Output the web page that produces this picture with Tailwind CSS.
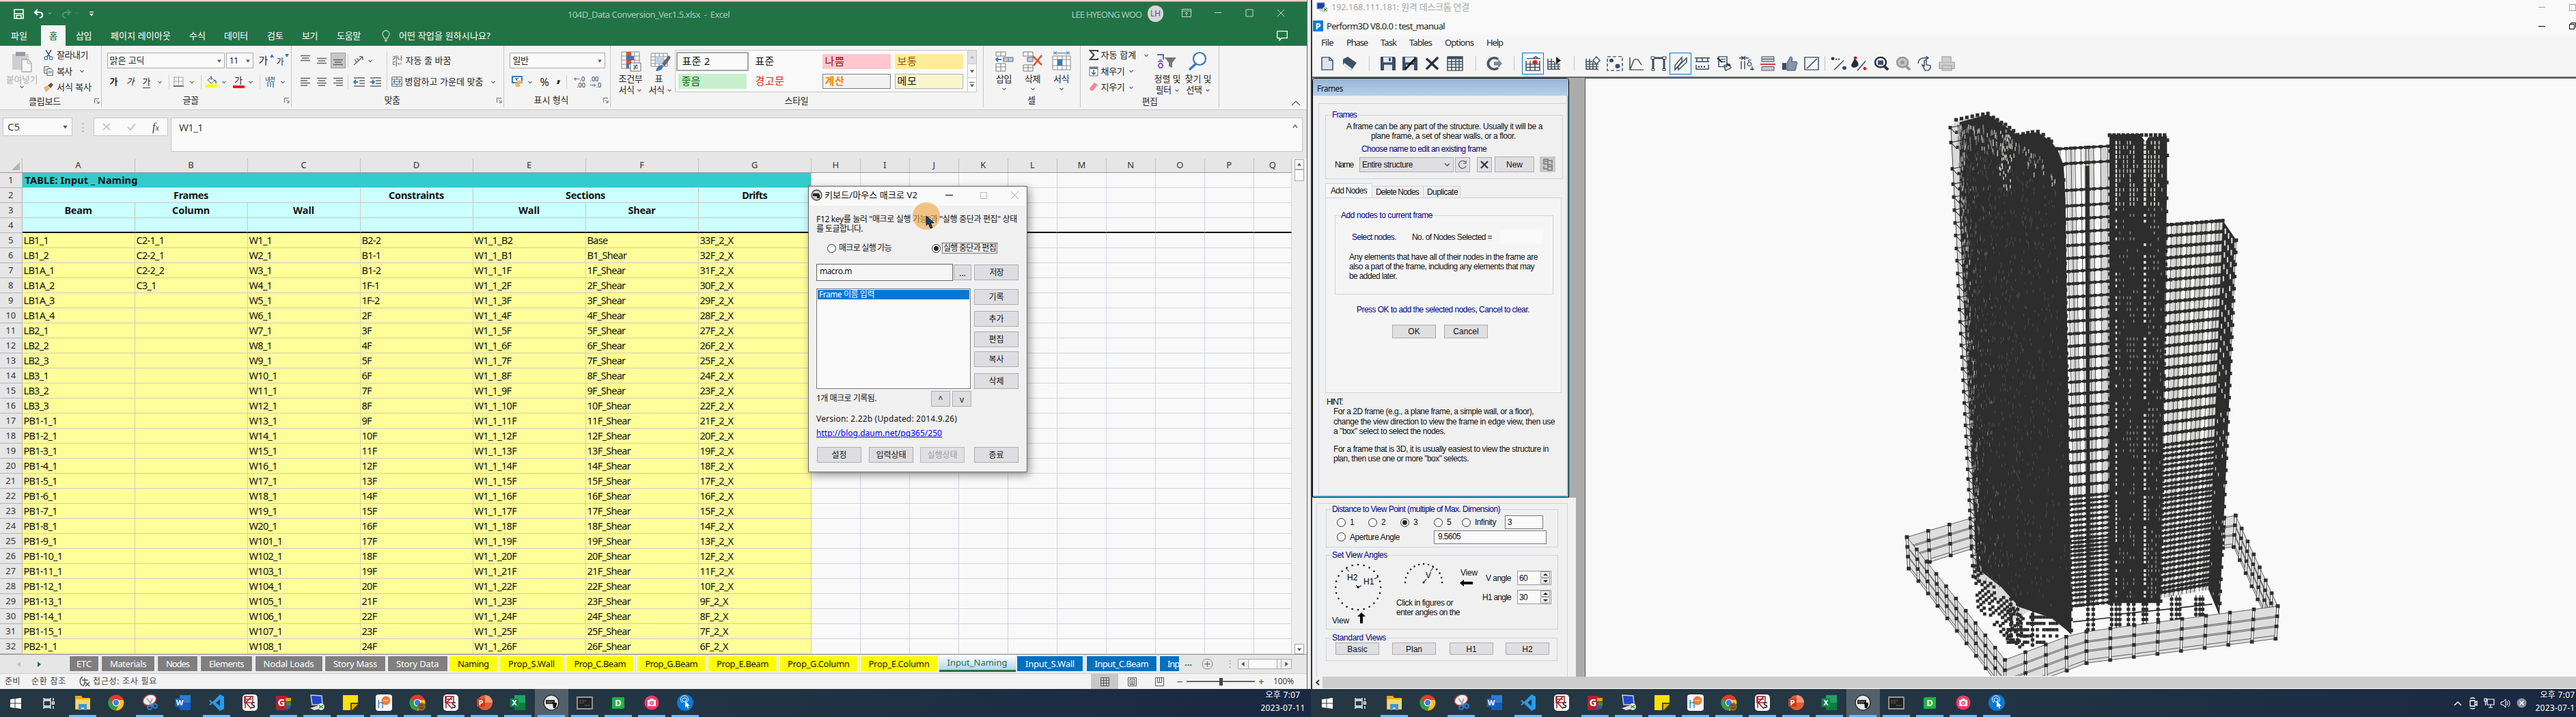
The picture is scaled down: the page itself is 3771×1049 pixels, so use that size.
<!DOCTYPE html>
<html lang="ko">
<head>
<meta charset="utf-8">
<title>Desktop</title>
<script src="https://cdn.jsdelivr.net/npm/@tailwindcss/browser@4"></script>
</head>
<body class="w-[3771px] h-[1049px] overflow-hidden flex bg-[#f9f9f9] text-[13px] leading-none text-[#262626] font-['Noto_Sans','Noto_Sans_CJK_KR',sans-serif] whitespace-nowrap">
<svg class="hidden">
  <symbol id="car" viewBox="0 0 8 8"><path d="M1.5 3l2.5 2.5L6.500 3" fill="none" stroke="#666" stroke-width="1.2"/></symbol>
  <symbol id="tri" viewBox="0 0 8 8"><path d="M1 2.500h6L4 6.500z" fill="#555"/></symbol>
  <symbol id="lau" viewBox="0 0 8 8"><path d="M.5 7V.5H7M3 3l4 4M7 4v3.300H4" fill="none" stroke="#666"/></symbol>
  <symbol id="al" viewBox="0 0 16 14"><path d="M1 1.500h14M1 5h10M1 8.500h14M1 12h10" stroke="#666" stroke-width="1.300"/></symbol>
  <symbol id="ac" viewBox="0 0 16 14"><path d="M1 1.500h14M3 5h10M1 8.500h14M3 12h10" stroke="#666" stroke-width="1.300"/></symbol>
  <symbol id="ar" viewBox="0 0 16 14"><path d="M1 1.500h14M5 5h10M1 8.500h14M5 12h10" stroke="#666" stroke-width="1.300"/></symbol>
  <symbol id="bars" viewBox="0 0 16 10"><path d="M1 1.500h14M3 5h10M1 8.500h14" stroke="#666" stroke-width="1.300"/></symbol>
</svg>

<!-- Left monitor -->
<div class="w-[1919px] h-[1049px] flex flex-col relative">
 <div class="flex h-[1008px]">
 <section class="w-[1913px] h-[1008px] flex flex-col bg-[#e6e6e6]">
  <div class="h-[3px] bg-[#f6cfc6] border-b border-[#888]"></div>
  <!-- title bar -->
  <header class="h-[34px] bg-[#217346] flex items-center text-[#a9cdb8]">
    <div class="w-[49px] pl-[20px]"><svg width="15" height="15" viewBox="0 0 15 15"><path d="M1 1h13v13H1zM4 14V9.500h7V14M1 7h13" fill="none" stroke="#fff" stroke-width="1.600"/></svg></div>
    <div class="w-[20px]"><svg width="17" height="14" viewBox="0 0 17 14"><path d="M2 5h7c5 0 6 7 0 8M6 1L2 5l4 4" fill="none" stroke="#fff" stroke-width="2.200"/></svg></div>
    <svg class="w-[8px] h-[8px]" viewBox="0 0 8 8"><path d="M1.500 2L4 4.500 6.500 2" fill="none" stroke="#a9cdb8"/></svg>
    <div class="w-[32px] pl-[11px] box-border"><svg width="17" height="14" viewBox="0 0 17 14"><path d="M15 5H8c-5 0-6 7 0 8M11 1l4 4-4 4" fill="none" stroke="#4f9670" stroke-width="2"/></svg></div>
    <svg class="w-[8px] h-[8px]" viewBox="0 0 8 8"><path d="M1.500 2L4 4.500 6.500 2" fill="none" stroke="#4f9670"/></svg>
    <div class="w-[720px] pl-[14px]"><svg width="8" height="9" viewBox="0 0 8 9"><path d="M1 1.500h6" stroke="#fff" stroke-width="1.200"/><path d="M1 4h6L4 7.500z" fill="#fff"/></svg></div>
    <div class="w-[743px] pt-[3px]"><span data-w="237">104D_Data Conversion_Ver.1.5.xlsx&nbsp; -&nbsp; Excel</span></div>
    <div class="w-[112px] pt-[3px]"><span data-w="103">LEE HYEONG WOO</span></div>
    <div class="w-[24px] h-[24px] rounded-full bg-[#d9d6d9] text-[#555] text-[12px] flex items-center justify-center">LH</div>
    <div class="w-[184px] ml-[27px] flex gap-[32px] pb-[3px]">
      <svg width="14" height="12" viewBox="0 0 14 12"><path d="M.5.500h13v11H.5zM.5 3h13M7 10V5M5 7l2-2 2 2" fill="none" stroke="#c5dccf"/></svg>
      <svg width="14" height="12" viewBox="0 0 14 12"><path d="M2 5.500h10" stroke="#c5dccf"/></svg>
      <svg width="14" height="12" viewBox="0 0 14 12"><path d="M2 1h10v10H2z" fill="none" stroke="#c5dccf"/></svg>
      <svg width="14" height="12" viewBox="0 0 14 12"><path d="M2 1l10 10M12 1L2 11" stroke="#c5dccf"/></svg>
    </div>
  </header>
  <!-- ribbon tabs -->
  <nav class="h-[30px] bg-[#217346] flex items-center text-white pl-[16px]">
    <div class="w-[44px]"><span data-w="24">파일</span></div>
    <div class="w-[36px] h-[30px] bg-[#f5f5f5] text-[#217346] flex items-center justify-center font-medium">홈</div>
    <div class="w-[66px] pl-[15px]"><span data-w="23">삽입</span></div>
    <div class="w-[115px]"><span data-w="88">페이지 레이아웃</span></div>
    <div class="w-[51px]"><span data-w="24">수식</span></div>
    <div class="w-[63px]"><span data-w="35">데이터</span></div>
    <div class="w-[51px]"><span data-w="24">검토</span></div>
    <div class="w-[51px]"><span data-w="23">보기</span></div>
    <div class="w-[65px]"><span data-w="35">도움말</span></div>
    <svg class="w-[14px] h-[17px]" viewBox="0 0 14 17"><path d="M4.500 12C4 9 2 8.500 2 5.500a5 4.800 0 0 1 10 0C12 8.500 10 9 9.500 12zM5 14.500h4M5.500 16.300h3" fill="none" stroke="#fff"/></svg>
    <div class="w-[1297px] pl-[12px]"><span data-w="134">어떤 작업을 원하시나요?</span></div>
    <svg width="16" height="15" viewBox="0 0 16 15"><path d="M.7.700h14.600v10H7L4 14v-3.300H.7z" fill="none" stroke="#fff" stroke-width="1.300"/></svg>
  </nav>
  <!-- ribbon -->
  <div class="h-[94px] bg-[#f4f4f5] border-b border-[#c8c8c8] flex py-[3px]">
    <div class="w-[148.500px] border-r border-[#c6c6c6] -mt-[3px] flex flex-col">
      <div class="flex h-[73px]">
        <div class="w-[64px] flex flex-col items-center pt-[8px] text-[#b0b0b0]">
          <svg width="30" height="31" viewBox="0 0 30 31"><path d="M1 4h24v23H1z" fill="#cfcfd3"/><path d="M6 1h14v6H6z" fill="#9a9aa0"/><path d="M15 12h9l5 5v13H15z" fill="#f7f7f7" stroke="#a9a9ad" stroke-width="1.300"/><path d="M23 12v6h6" fill="none" stroke="#a9a9ad"/></svg>
          <span class="mt-[4px]" data-w="46">붙여넣기</span><svg class="w-[8px] h-[8px]"><use href="#car"/></svg>
        </div>
        <div class="pt-[2px] flex flex-col">
          <div class="h-[23.500px] flex items-center gap-[5px]"><svg width="14" height="15" viewBox="0 0 14 15"><path d="M3 0l6 10M11 0L5 10" stroke="#555" stroke-width="1.600"/><circle cx="3.300" cy="12" r="2.300" fill="none" stroke="#3b78b5" stroke-width="1.300"/><circle cx="10.700" cy="12" r="2.300" fill="none" stroke="#3b78b5" stroke-width="1.300"/></svg><span data-w="46">잘라내기</span></div>
          <div class="h-[23.500px] flex items-center gap-[5px]"><svg width="14" height="14" viewBox="0 0 14 14"><path d="M.7.700H7l1 1V10H.7z" fill="#fff" stroke="#555"/><path d="M5 3.700h6l2.300 2.300v7.300H5z" fill="#fff" stroke="#555"/><path d="M6.500 7.500H12M6.500 9.500H12M2 4h2M2 6h2" stroke="#3b78b5"/></svg><span data-w="22">복사</span><svg class="w-[8px] h-[8px] ml-[6px]"><use href="#car"/></svg></div>
          <div class="h-[23.500px] flex items-center gap-[5px]"><svg width="14" height="14" viewBox="0 0 14 14"><path d="M0 7l5-3 4 5-6 5z" fill="#e9b767"/><path d="M6 4l5-4 3 3-4 5z" fill="#555"/></svg><span data-w="51">서식 복사</span></div>
        </div>
      </div>
      <div class="h-[21px] flex items-center"><div class="w-[96px] pl-[42px]"><span data-w="47">클립보드</span></div><svg class="w-[8px] h-[8px] ml-auto mr-[2px]"><use href="#lau"/></svg></div>
    </div>
    <div class="w-[278px] border-r border-[#c6c6c6] -mt-[3px] flex flex-col">
      <div class="h-[73px] pt-[6px] pl-[8px]">
        <div class="h-[31px] flex items-center">
          <div class="w-[172px] h-[23px] border border-[#ababab] bg-[#fafafa] flex items-center justify-between pl-[3px] pr-[3px]"><span data-w="51">맑은 고딕</span><svg class="w-[8px] h-[8px]"><use href="#tri"/></svg></div>
          <div class="w-[40px] h-[23px] border border-[#ababab] ml-[2px] bg-[#fafafa] flex items-center justify-between pl-[4px] pr-[3px]"><span data-w="13">11</span><svg class="w-[8px] h-[8px]"><use href="#tri"/></svg></div>
          <div class="w-[24px] text-[15px] pl-[8px]">가</div><svg class="w-[6px] h-[5px] -mt-[15px]" viewBox="0 0 6 5"><path d="M0 5l3-5 3 5z" fill="#3b78b5"/></svg>
          <div class="w-[16px] text-[12px] pl-[4px] pt-[4px]">가</div><svg class="w-[6px] h-[5px] -mt-[15px]" viewBox="0 0 6 5"><path d="M0 0l3 5 3-5z" fill="#3b78b5"/></svg>
        </div>
        <div class="h-[31px] flex items-center">
          <div class="w-[23px] pl-[4px] font-bold">가</div><div class="w-[24px] pl-[5px] italic">가</div><div class="w-[26px] pl-[5px]"><span class="border-b border-[#444]">가</span></div>
          <svg class="w-[8px] h-[8px]"><use href="#car"/></svg>
          <i class="w-px h-[20px] bg-[#d0d0d0] ml-[9px]"></i>
          <svg class="ml-[6px]" width="15" height="15" viewBox="0 0 15 15"><path d="M1 1h13v12M1 1v12M7.500 1v12M1 7h13" fill="none" stroke="#777" stroke-dasharray="1.500 1"/><path d="M0 14h15" stroke="#444" stroke-width="1.500"/></svg>
          <svg class="w-[8px] h-[8px] ml-[8px]"><use href="#car"/></svg><i class="w-px h-[20px] bg-[#d0d0d0] ml-[9px]"></i>
          <svg class="ml-[6px]" width="17" height="17" viewBox="0 0 17 17"><path d="M3 6l5-4 5 5-5 4z" fill="#fff" stroke="#555"/><path d="M8 0v6M13 6q3 2 2 5" stroke="#3b78b5" stroke-width="1.600" fill="none"/><path d="M0 12.500h17V17H0z" fill="#ff0"/></svg>
          <svg class="w-[8px] h-[8px] ml-[6px]"><use href="#car"/></svg>
          <div class="ml-[9px] w-[17px] h-[18px] border-b-[4px] border-[#e02010] text-[13px] text-center">가</div>
          <svg class="w-[8px] h-[8px] ml-[5px]"><use href="#car"/></svg><i class="w-px h-[20px] bg-[#d0d0d0] ml-[9px]"></i>
          <div class="ml-[6px] w-[18px] text-[8px] text-center leading-[8px]">내천<svg class="mx-auto" width="10" height="8" viewBox="0 0 10 8"><path d="M1 0v7M5 0v7M9 0v8" stroke="#3b78b5" stroke-width="1.500"/></svg></div>
          <svg class="w-[8px] h-[8px] ml-[5px]"><use href="#car"/></svg>
        </div>
      </div>
      <div class="h-[21px] flex items-center pl-[119px]"><span data-w="23">글꼴</span><svg class="w-[8px] h-[8px] ml-auto mr-[2px]"><use href="#lau"/></svg></div>
    </div>
    <div class="w-[311px] border-r border-[#c6c6c6] -mt-[3px] flex flex-col">
      <div class="h-[73px] pt-[6px] pl-[12px]">
        <div class="h-[31px] flex items-center">
          <svg class="w-[16px] h-[10px] -mt-[8px]"><use href="#bars"/></svg><svg class="w-[16px] h-[10px] ml-[8px]"><use href="#bars"/></svg>
          <div class="w-[22px] h-[23px] ml-[5px] bg-[#c8c8c8] border border-[#999] flex items-end justify-center pb-[3px]"><svg class="w-[16px] h-[10px]"><use href="#bars"/></svg></div>
          <i class="w-px h-[20px] bg-[#d0d0d0] ml-[3px]"></i>
          <svg class="ml-[7px]" width="17" height="15" viewBox="0 0 17 15"><path d="M1 14L14 2M14 2H9M14 2v5M2 6l4 5M5 4l4 4" fill="none" stroke="#666" stroke-width="1.300"/></svg>
          <svg class="w-[8px] h-[8px] ml-[4px]"><use href="#car"/></svg><i class="w-px h-[56px] -mb-[31px] bg-[#d0d0d0] ml-[20px]"></i>
          <div class="w-[19px] ml-[8px] text-[8px] leading-[8px] whitespace-pre">가나
다<span class="text-[#3b78b5]">↵</span></div><span data-w="67">자동 줄 바꿈</span>
        </div>
        <div class="h-[31px] flex items-center">
          <svg class="w-[16px] h-[14px]"><use href="#al"/></svg><svg class="w-[16px] h-[14px] ml-[8px]"><use href="#ac"/></svg><svg class="w-[16px] h-[14px] ml-[8px]"><use href="#ar"/></svg><i class="w-px h-[20px] bg-[#d0d0d0] ml-[6px]"></i>
          <svg class="ml-[7px]" width="18" height="14" viewBox="0 0 18 14"><path d="M1 1h16M9 5h8M9 9h8M1 13h16" stroke="#666" stroke-width="1.300"/><path d="M7 7H1M4 4L1 7l3 3" fill="none" stroke="#3b78b5" stroke-width="1.800"/></svg>
          <svg class="ml-[6px]" width="18" height="14" viewBox="0 0 18 14"><path d="M1 1h16M9 5h8M9 9h8M1 13h16" stroke="#666" stroke-width="1.300"/><path d="M1 7h6M4 4l3 3-3 3" fill="none" stroke="#3b78b5" stroke-width="1.800"/></svg>
          <svg class="ml-[14px]" width="16" height="15" viewBox="0 0 16 15"><path d="M.7.700h14.600v13.600H.7zM.7 4h14.600M.7 11h14.600M8 .7V4M8 11v3" fill="none" stroke="#666"/><path d="M3 7.500h10M5 5.500l-2 2 2 2M11 5.500l2 2-2 2" fill="none" stroke="#3b78b5" stroke-width="1.200"/></svg>
          <span class="ml-[4px]" data-w="115">병합하고 가운데 맞춤</span><svg class="w-[8px] h-[8px] ml-[10px]"><use href="#car"/></svg>
        </div>
      </div>
      <div class="h-[21px] flex items-center pl-[136px]"><span data-w="23">맞춤</span><svg class="w-[8px] h-[8px] ml-auto mr-[2px]"><use href="#lau"/></svg></div>
    </div>
    <div class="w-[156px] border-r border-[#c6c6c6] -mt-[3px] flex flex-col">
      <div class="h-[73px] pt-[6px] pl-[8px]">
        <div class="h-[31px] flex items-center"><div class="w-[140px] h-[23px] border border-[#ababab] bg-[#fafafa] flex items-center justify-between pl-[4px] pr-[3px]"><span data-w="23">일반</span><svg class="w-[8px] h-[8px]"><use href="#tri"/></svg></div></div>
        <div class="h-[31px] flex items-center pl-[3px]">
          <svg width="17" height="17" viewBox="0 0 17 17"><path d="M1 1h14v9H1z" fill="#fff" stroke="#3b78b5" stroke-width="2"/><path d="M10 4H6l2 3" fill="none" stroke="#3b78b5" stroke-width="1.500"/><ellipse cx="12" cy="9" rx="4" ry="2.500" fill="#e9b767"/><path d="M5 10h7v6H6z" fill="#e9b767"/></svg>
          <svg class="w-[8px] h-[8px] ml-[6px]"><use href="#car"/></svg><div class="w-[24px] ml-[11px] text-[16px]">%</div><div class="w-[14px] text-[24px] font-bold -mt-[18px]">,</div>
          <i class="w-px h-[20px] bg-[#d0d0d0]"></i>
          <div class="ml-[10px] w-[24px] text-[9px] leading-[9px]"><b class="text-[#3b78b5]">←</b>.0<br>&nbsp; .00</div><div class="w-[20px] text-[9px] leading-[9px]">.00<br><b class="text-[#3b78b5]">→</b>.0</div>
        </div>
      </div>
      <div class="h-[21px] flex items-center pl-[44px]"><span data-w="51">표시 형식</span><svg class="w-[8px] h-[8px] ml-auto mr-[2px]"><use href="#lau"/></svg></div>
    </div>
    <div class="w-[546px] border-r border-[#c6c6c6] -mt-[3px] flex flex-col">
      <div class="h-[73px] flex">
        <div class="w-[56px] pl-[12px] pt-[8px]"><svg class="ml-[3px]" width="30" height="30" viewBox="0 0 30 30"><path d="M1 1h26v24H1zM1 7h26M1 13h26M1 19h26M8 1v24M20 1v24" fill="#fff" stroke="#888"/><path d="M8 1h7v6H8zM8 13h7v6H8z" fill="#d65532"/><path d="M8 7h11v6H8zM8 19h4v6H8z" fill="#3b78b5"/><path d="M14 17h15v12H14z" fill="#fff" stroke="#666"/><path d="M18 21.500h7M18 24.500h7M23 19l-4 8" stroke="#333"/></svg>
          <div class="mt-[4px]"><span data-w="35">조건부</span></div><div class="mt-[3px] flex items-center gap-[3px]"><span data-w="23">서식</span><svg class="w-[8px] h-[8px]"><use href="#car"/></svg></div></div>
        <div class="w-[38px] pt-[8px]"><svg class="ml-[2px]" width="30" height="30" viewBox="0 0 30 30"><path d="M1 3h24v19H1zM1 8h24M1 13h24M1 18h24M7 3v19M13 3v19M19 3v19" fill="#fff" stroke="#888"/><path d="M8 8h11v10H8z" fill="#bdd3ea"/><path d="M17 18L27 6l3 3-9 13z" fill="#666"/><path d="M8 29c2-7 5-9 10-9 2 6-4 9-10 9z" fill="#3b78b5"/></svg>
          <div class="mt-[4px] text-center pr-[8px]">표</div><div class="mt-[3px] flex items-center gap-[3px]"><span data-w="23">서식</span><svg class="w-[8px] h-[8px]"><use href="#car"/></svg></div></div>
        <div class="w-[442px] h-[62px] mt-[6px] border border-[#c6c6c6] bg-[#fafafa] flex text-[15px] text-[#111]">
          <div class="w-[427px] grid grid-cols-[108px_106px_106px_104px] grid-rows-[29px_29px] items-center pt-[1px] pl-[1px]">
            <div class="w-[106px] h-[28px] border-2 border-[#a6a6a6] flex items-center pl-[7px]"><span data-w="41">표준 2</span></div><div class="pl-[8px]"><span data-w="28">표준</span></div>
            <div class="w-[100px] h-[22px] bg-[#ffc7ce] text-[#9c0006] flex items-center pl-[4px]"><span data-w="29">나쁨</span></div><div class="w-[100px] h-[22px] bg-[#ffeb9c] text-[#9c5700] flex items-center pl-[4px]"><span data-w="29">보통</span></div>
            <div class="w-[100px] h-[22px] ml-[3px] bg-[#c6efce] text-[#006100] flex items-center pl-[5px]"><span data-w="28">좋음</span></div><div class="pl-[8px] text-[#e02010]"><span data-w="43">경고문</span></div>
            <div class="w-[100px] h-[22px] bg-[#f2f2f2] border border-[#7f7f7f] text-[#ee8a00] flex items-center pl-[3px] font-bold"><span data-w="29">계산</span></div><div class="w-[100px] h-[22px] bg-[#faf6cc] border border-[#b2b2b2] flex items-center pl-[3px]"><span data-w="29">메모</span></div>
          </div>
          <div class="flex-1 border-l border-[#c6c6c6] flex flex-col items-center divide-y divide-[#c6c6c6]"><div class="h-[20px] w-full bg-[#e2e2e4] flex items-center justify-center"><svg class="w-[8px] h-[8px] rotate-180 opacity-30"><use href="#tri"/></svg></div><div class="h-[20px] w-full flex items-center justify-center"><svg class="w-[8px] h-[8px]"><use href="#tri"/></svg></div><div class="h-[20px] w-full flex flex-col items-center justify-center"><i class="w-[7px] h-px bg-[#555]"></i><svg class="w-[8px] h-[8px]"><use href="#tri"/></svg></div></div>
        </div>
      </div>
      <div class="h-[21px] flex items-center pl-[255px]"><span data-w="35">스타일</span></div>
    </div>
    <div class="w-[142px] border-r border-[#c6c6c6] -mt-[3px] flex flex-col">
      <div class="h-[73px] pt-[8px] pl-[9px] flex text-center">
        <div class="w-[42px] flex flex-col items-center"><svg width="28" height="30" viewBox="0 0 28 30"><path d="M2 1h14v6H2zM9 1v6M2 18h14v11H2zM9 18v11M2 23h14" fill="#fff" stroke="#777"/><path d="M13 9h14v6H13zM20 9v6" fill="#bdd3ea" stroke="#667"/><path d="M10 12H2M5 9l-3 3 3 3" fill="none" stroke="#3b78b5" stroke-width="1.800"/></svg><span class="mt-[4px]" data-w="23">삽입</span><svg class="w-[8px] h-[8px] mt-[4px]"><use href="#car"/></svg></div>
        <div class="w-[42px] flex flex-col items-center"><svg width="30" height="30" viewBox="0 0 30 30"><path d="M1 1h14v6H1zM8 1v6M1 20h14v9H1zM8 20v9M1 24h14" fill="#fff" stroke="#777"/><path d="M7 9h8v6H7z" fill="#bdd3ea" stroke="#667"/><path d="M15 7l13 13M28 6L16 21" stroke="#d65532" stroke-width="2.600"/></svg><span class="mt-[4px]" data-w="23">삭제</span><svg class="w-[8px] h-[8px] mt-[4px]"><use href="#car"/></svg></div>
        <div class="w-[42px] flex flex-col items-center"><svg width="28" height="30" viewBox="0 0 28 30"><path d="M1 7h26v20H1zM1 12h26M1 21h26M8 7v20M15 7v20M21 7v20" fill="#fff" stroke="#888"/><path d="M8 12h7v9H8z" fill="#3b78b5"/><path d="M4 2.500h20M7 0L4 2.500 7 5M21 0l3 2.500L21 5M3 0v5M25 0v5" fill="none" stroke="#3b78b5"/></svg><span class="mt-[4px]" data-w="23">서식</span><svg class="w-[8px] h-[8px] mt-[4px]"><use href="#car"/></svg></div>
      </div>
      <div class="h-[21px] flex items-center justify-center">셀</div>
    </div>
    <div class="w-[203px] border-r border-[#c6c6c6] -mt-[3px] flex flex-col">
      <div class="h-[73px] flex pl-[12px]">
        <div class="w-[93px] pt-[2px]">
          <div class="h-[23.500px] flex items-center"><svg class="w-[18px] h-[15px]" viewBox="0 0 18 15"><path d="M13 3V1H1.500l6 6.500L1.500 14H13v-2" fill="none" stroke="#444" stroke-width="2"/></svg><span data-w="52">자동 합계</span><svg class="w-[8px] h-[8px] ml-[10px]"><use href="#car"/></svg></div>
          <div class="h-[23.500px] flex items-center"><svg class="w-[18px] h-[15px]" viewBox="0 0 18 15"><path d="M1 1h12v13H1z" fill="#fff" stroke="#777"/><path d="M1 1h12v3H1z" fill="#777"/><path d="M7 5v7M4 9l3 3 3-3" fill="none" stroke="#3b78b5" stroke-width="1.700"/></svg><span data-w="35">채우기</span><svg class="w-[8px] h-[8px] ml-[5px]"><use href="#car"/></svg></div>
          <div class="h-[23.500px] flex items-center"><svg class="w-[18px] h-[15px]" viewBox="0 0 18 15"><path d="M1 9l7-8 5 3-7 9-4-1z" fill="#ee8a9b"/></svg><span data-w="35">지우기</span><svg class="w-[8px] h-[8px] ml-[5px]"><use href="#car"/></svg></div>
        </div>
        <div class="w-[45px] pt-[8px] pl-[3px]"><svg class="ml-[3px]" width="30" height="30" viewBox="0 0 30 30"><path d="M1 5h9v7M5 21" fill="none" stroke="#3b78b5" stroke-width="2"/><path d="M2 15h8M4 13h4" stroke="#8b52b0" stroke-width="1.600"/><circle cx="6" cy="21" r="3.200" fill="none" stroke="#8b52b0" stroke-width="2"/><path d="M12 9h17l-6 8v7l-5-2v-5z" fill="#777"/></svg>
          <div class="mt-[4px]"><span data-w="39">정렬 및</span></div><div class="mt-[3px] flex items-center gap-[4px] pl-[2px]"><span data-w="23">필터</span><svg class="w-[8px] h-[8px]"><use href="#car"/></svg></div></div>
        <div class="pt-[8px] pl-[3px]"><svg class="ml-[4px]" width="30" height="30" viewBox="0 0 30 30"><circle cx="17" cy="11" r="9" fill="#fff" stroke="#3b78b5" stroke-width="2.200"/><path d="M12 18L2 27" stroke="#3b78b5" stroke-width="3.500"/></svg>
          <div class="mt-[4px]"><span data-w="39">찾기 및</span></div><div class="mt-[3px] flex items-center gap-[4px] pl-[2px]"><span data-w="23">선택</span><svg class="w-[8px] h-[8px]"><use href="#car"/></svg></div></div>
      </div>
      <div class="h-[21px] flex items-center pl-[90px]"><span data-w="23">편집</span></div>
    </div>
    <svg class="w-[14px] h-[8px] ml-auto mr-[9px] self-end mb-[2px]" viewBox="0 0 14 8"><path d="M1 7l6-6 6 6" fill="none" stroke="#555" stroke-width="1.200"/></svg>
  </div>
  <!-- formula bar -->
  <div class="h-[71px] flex pt-[11px] pl-[4px] text-[15px] text-[#444]">
    <div class="w-[102px] h-[27px] border border-[#c6c6c6] bg-[#fafafa] flex items-center justify-between pl-[6px] pr-[5px]"><span data-w="18">C5</span><svg class="w-[9px] h-[9px]"><use href="#tri"/></svg></div>
    <div class="w-[31px] h-[27px] flex items-center justify-center text-[#aaa]">⋮</div>
    <div class="w-[109px] h-[27px] border border-[#c6c6c6] bg-[#fafafa] flex items-center pl-[12px]">
      <svg class="w-[36px] h-[11px]" viewBox="0 0 36 11"><path d="M1 1l10 9M11 1L1 10" stroke="#c4c4c4" stroke-width="1.800"/></svg><svg class="w-[37px] h-[11px]" viewBox="0 0 37 11"><path d="M1 6l4 4 7-9" fill="none" stroke="#c4c4c4" stroke-width="2"/></svg><i class="font-['Liberation_Serif',serif] text-[16px]">f<span class="text-[12px]">x</span></i></div>
    <div class="w-[1657px] h-[50px] ml-[4px] border border-[#c6c6c6] bg-[#fafafa] flex justify-between items-start pl-[11px] pr-[6px] pt-[6px]"><span data-w="35">W1_1</span><svg class="w-[8px] h-[6px] mt-[3px]" viewBox="0 0 8 6"><path d="M1 5l3-4 3 4" fill="none" stroke="#666" stroke-width="1.500"/></svg></div>
  </div>
  <!-- grid -->
  <div class="flex h-[725px] overflow-hidden">
    <div class="w-[1891px]">
      <div id="cols" class="h-[20.500px] flex border-b border-[#999] text-[13px] text-[#333]"></div>
      <div id="rows" class="text-[14.500px] text-[#111]"></div>
    </div>
    <div class="w-[22px] bg-[#eeeeef] pl-[4px] pt-[1px] flex flex-col">
      <div class="w-[14px] h-[15px] border border-[#aaa] bg-[#fafafa] flex items-center justify-center"><svg class="w-[8px] h-[8px] rotate-180"><use href="#tri"/></svg></div>
      <div class="w-[14px] h-[17px] border border-[#aaa] bg-[#fafafa]"></div>
      <div class="w-[14px] h-[15px] border border-[#aaa] bg-[#fafafa] mt-auto flex items-center justify-center"><svg class="w-[8px] h-[8px]"><use href="#tri"/></svg></div>
    </div>
  </div>
  <!-- sheet tabs -->
  <div class="h-[28px] border-t border-[#999] flex items-start text-[13px]">
    <div class="w-[102px] h-full flex items-center pl-[24px] gap-[22px]"><svg width="8" height="8" viewBox="0 0 8 8"><path d="M6 0v8L1 4z" fill="#c0c0c0"/></svg><svg width="8" height="8" viewBox="0 0 8 8"><path d="M1 0v8l5-4z" fill="#217346"/></svg></div>
    <div id="sheets" class="flex w-[1624px] h-[27px]"></div>
    <b class="w-[34px] pl-[8px] pt-[5px] text-[#217346]">...</b>
    <svg class="w-[17px] h-[17px] mt-[5px] -ml-[1px]" viewBox="0 0 17 17"><circle cx="8.500" cy="8.500" r="7.500" fill="none" stroke="#888"/><path d="M4.500 8.500h8M8.500 4.500v8" stroke="#777" stroke-width="1.500"/></svg>
    <div class="w-[36px] pt-[6px] pl-[18px] text-[#aaa]">⋮</div>
    <div class="w-[79px] h-[15px] mt-[6px] border border-[#aaa] bg-[#f2f2f2] flex items-center justify-between"><svg class="w-[14px] h-[9px] rotate-90"><use href="#tri"/></svg><div class="flex-1 h-full bg-[#fafafa] border-x border-[#aaa] mr-[5px]"></div><div class="border-l border-[#aaa] h-full flex items-center"><svg class="w-[14px] h-[9px] -rotate-90"><use href="#tri"/></svg></div></div>
  </div>
  <!-- status bar -->
  <div class="h-[23px] bg-[#f3f3f3] border-t border-[#d0d0d0] flex items-center text-[12px] text-[#444] pl-[7px] flex-1">
    <div class="w-[39px]"><span data-w="23">준비</span></div><div class="w-[70px]"><span data-w="51">순환 참조</span></div>
    <svg class="w-[17px] h-[16px]" viewBox="0 0 17 16"><path d="M5 1C0 4 0 12 5 14M8 3v3M4 6h9M8 6v4l-2 5M9 9l6 6M15 9l-6 6" fill="none" stroke="#555" stroke-width="1.500"/></svg>
    <div class="w-[1464px] pl-[3px]"><span data-w="94">접근성: 조사 필요</span></div>
    <div class="w-[40px] h-[22px] bg-[#c8c8c8] flex items-center justify-center"><svg width="13" height="13" viewBox="0 0 13 13"><path d="M.5.500h12v12H.5zM.5 4.500h12M.5 8.500h12M4.500.500v12M8.500.500v12" fill="none" stroke="#555"/></svg></div>
    <div class="w-[40px] flex justify-center"><svg width="13" height="13" viewBox="0 0 13 13"><path d="M.5.500h12v12H.5zM3 2.500h7v8H3zM4.500 5h4M4.500 7h4M4.500 9h4" fill="none" stroke="#555"/></svg></div>
    <div class="w-[40px] flex justify-center"><svg width="13" height="13" viewBox="0 0 13 13"><path d="M.5.500h12v12H.5zM3.500.500v7h6v-7M6.500.500v7" fill="none" stroke="#555"/></svg></div>
    <div class="w-[14px] text-center ml-[3px] text-[15px]">−</div>
    <div class="w-[100px] h-[11px] ml-[3px] flex items-center justify-center relative"><div class="w-[100px] h-[1.500px] bg-[#666]"></div><div class="absolute w-[5px] h-[11px] bg-[#444] left-[48px]"></div></div>
    <div class="w-[27px] text-[15px] pl-[5px]">+</div><span data-w="30">100%</span>
  </div>
 </section>
 <div class="w-[6px] border-l border-[#666] bg-[#ececee]"></div>
 </div>
 <footer class="h-[41px] flex bg-gradient-to-r from-[#243743] from-40% to-[#1a2842] text-white">
   <div class="tb flex h-[41px] w-[1845px]"></div>
   <div class="w-[66px] pt-[3px] text-[12px] flex flex-col items-center gap-[5px]"><span class="h-[14px]" data-w="51">오후 7:07</span><span data-w="65">2023-07-11</span></div>
 </footer>

 <!-- macro dialog -->
 <div class="absolute left-[1183px] top-[272px] w-[321px] h-[419px] bg-[#f0f0f0] border border-[#666] shadow-[3px_4px_12px_rgba(0,0,0,0.4)] text-[12px] text-[#111]">
   <div class="h-[28px] bg-[#fafafa] flex items-center text-[13px] pb-[3px]">
     <svg class="w-[17px] h-[17px] ml-[3px]" viewBox="0 0 17 17"><circle cx="8.500" cy="8.500" r="7.500" fill="#ccc" stroke="#444" stroke-width="1.300"/><path d="M3 6h9v4H3zM9 8h4v5H9z" fill="#222"/></svg>
     <div class="w-[180px] pl-[3px]"><span data-w="136">키보드/마우스 매크로 V2</span></div>
     <div class="w-[51px]"><div class="w-[11px] h-px bg-black"></div></div><div class="w-[45px]"><div class="w-[10px] h-[10px] border border-[#bbb]"></div></div>
     <svg width="11" height="11" viewBox="0 0 11 11"><path d="M0 0l11 11M11 0L0 11" stroke="#aaa"/></svg>
   </div>
   <div class="pl-[11px] pt-[13px]">
     <div class="h-[14px] flex items-center"><span data-w="294">F12 key를 눌러 "매크로 실행 가능"과 "실행 중단과 편집" 상태</span></div>
     <div class="h-[14px] flex items-center"><span data-w="68">를 토글합니다.</span></div>
     <div class="flex items-center mt-[12px] h-[18px] pl-[16px]"><div class="w-[13px] h-[13px] rounded-full border border-[#333] bg-[#fafafa]"></div><div class="w-[140px] pl-[4px]"><span data-w="77">매크로 실행 가능</span></div><div class="w-[13px] h-[13px] rounded-full border border-[#333] bg-[#fafafa] flex items-center justify-center"><div class="w-[7px] h-[7px] rounded-full bg-[#222]"></div></div><div class="ml-[2px] h-[16px] border border-dotted border-black flex items-center px-px"><span data-w="77">실행 중단과 편집</span></div></div>
     <div class="flex mt-[14px]"><div class="w-[200px] h-[25px] border border-[#666] bg-[#f6f6f7] flex items-center pl-[4px] pb-[4px]"><span data-w="47">macro.m</span></div><div class="w-[26px] h-[23px] mt-px ml-px border border-[#adadad] bg-[#dedee2] text-center pt-[6px]">...</div><div class="w-[65px] h-[23px] mt-px ml-[4px] border border-[#adadad] bg-[#dedee2] flex items-center justify-center"><span data-w="20">저장</span></div></div>
     <div class="flex mt-[11px]"><div class="w-[226px] h-[147px] border border-[#7a7a7a] bg-[#fafafa] p-px"><div class="h-[14px] bg-[#0078d7] text-white flex items-center pl-[2px]"><span data-w="81">Frame 이름 입력</span></div></div>
       <div class="ml-[5px] flex flex-col pt-px text-center *:w-[65px] *:h-[23px] *:border *:border-[#adadad] *:bg-[#dedee2] *:pt-[5px]"><div>기록</div><div class="mt-[9px]">추가</div><div class="mt-[7px]">편집</div><div class="mt-[6px]">복사</div><div class="mt-[9px]">삭제</div></div></div>
     <div class="flex mt-[3px] items-center"><div class="w-[168px] pb-[2px]"><span data-w="88">1개 매크로 기록됨.</span></div><div class="w-[28px] h-[23px] border border-[#adadad] bg-[#dedee2] text-center pt-[5px]">^</div><div class="w-[28px] h-[23px] ml-[3px] border border-[#adadad] bg-[#dedee2] text-center pt-[6px]">v</div></div>
     <div class="mt-[10px] h-[16px] flex items-center"><span data-w="206">Version: 2.22b (Updated: 2014.9.26)</span></div>
     <div class="mt-[5px] h-[16px] flex items-center text-[#0000ee] underline"><span data-w="184">http://blog.daum.net/pq365/250</span></div>
     <div class="flex mt-[12px] pl-px text-center *:w-[65px] *:h-[23px] *:border *:border-[#adadad] *:bg-[#dedee2] *:pt-[5px]"><div>설정</div><div class="ml-[11px]">입력상태</div><div class="ml-[10px] text-[#888] opacity-80">실행상태</div><div class="ml-[14px]">종료</div></div>
   </div>
 </div>
 <div class="absolute left-[1336px] top-[296px] w-[40px] h-[40px] rounded-full bg-[#f2a33a]/60"></div>
 <svg class="absolute left-[1355px] top-[315px]" width="14" height="20" viewBox="0 0 14 20"><path d="M1 1v14l3-3 3 7 3-1-3-7h5z" fill="#17407c" stroke="#111"/></svg>
</div>

<!-- Right monitor -->
<div class="w-[1852px] h-[1049px] flex flex-col">
 <section class="h-[1008px] border-l-2 border-[#333] flex flex-col">
  <div class="h-[25px] flex items-center pl-[6px] text-[#aaa] pb-[4px]">
    <svg class="w-[17px] h-[16px]" viewBox="0 0 17 16"><path d="M1 1h11v9H1z" fill="#1c3fb0" stroke="#99a"/><path d="M3 11l8 4 1-3z" fill="#bbb"/><circle cx="13" cy="11" r="4" fill="#c9d6c9"/><path d="M11 9l2 2-2 2M15 9l-2 2 2 2" stroke="#2a8a2a" fill="none"/></svg>
    <div class="w-[1774px] pl-[5px]"><span data-w="202">192.168.111.181: 원격 데스크톱 연결</span></div><div class="w-[10px] h-px bg-[#a898a8]"></div><div class="ml-[35px] w-[10px] h-[10px] border border-[#a898a8] shrink-0"></div>
  </div>
  <div class="h-[26px] flex items-center text-[#222]">
    <div class="w-[15px] h-[16px] bg-[#0b7ad8] text-white font-bold flex items-center justify-center ml-px">P</div>
    <div class="w-[1781px] pl-[5px]"><span data-w="173">Perform3D V8.0.0 : test_manual</span></div><div class="w-[10px] h-px bg-black"></div><svg class="ml-[35px] shrink-0" width="10" height="10" viewBox="0 0 10 10"><path d="M.5 2.500h7v7h-7zM2.500 2.500v-2h7v7" fill="none" stroke="#000"/></svg>
  </div>
  <div class="h-[22px] bg-[#f5f5f6] flex items-center pl-[13px]">
    <div class="w-[37px]"><span data-w="18">File</span></div><div class="w-[50px]"><span data-w="31">Phase</span></div><div class="w-[42px]"><span data-w="23">Task</span></div><div class="w-[52px]"><span data-w="33">Tables</span></div><div class="w-[61px]"><span data-w="42">Options</span></div><span data-w="24">Help</span>
  </div>
  <div id="tools" class="h-[39px] bg-[#f5f5f6] flex items-center pl-[7px]"></div>
  <div class="h-[2px] bg-[#667066]"></div>
  <div class="flex h-[876px] bg-[#ababab]">
   <div class="w-[386px] flex flex-col">
    <!-- Frames window -->
    <div class="w-[376px] h-[614px] border border-black rounded-t-[4px] bg-[#f0f0f0] overflow-hidden font-['Liberation_Sans',sans-serif] text-[12px] text-[#111] shadow-[inset_-2px_-2px_0_#5cc0e0]">
      <div class="h-[25px] bg-gradient-to-b from-[#98b4d2] to-[#b4d0ec] flex items-center pl-[6px] pt-[4px] font-['Noto_Sans',sans-serif]"><span data-w="38">Frames</span></div>
      <div class="ml-[8px] mt-[11px] mr-[2px] h-[573px] border-t border-l border-[#ccd3da]">
        <fieldset class="mx-[9px] mt-[10px] w-[348px] h-[100px] border border-[#ccd3da] relative">
          <legend class="ml-[8px] px-px text-[#00008b]"><span data-w="36">Frames</span></legend>
          <div class="pl-[30px] pt-[5px] h-[19px]"><span data-w="287">A frame can be any part of the structure. Usually it will be a</span></div>
          <div class="pl-[66px] h-[19px]"><span data-w="212">plane frame, a set of shear walls, or a floor.</span></div>
          <div class="pl-[52px] h-[17px] text-[#00008b]"><span data-w="183">Choose name to edit an existing frame</span></div>
          <div class="flex items-center pl-[13px]"><div class="w-[36px]"><span data-w="27">Name</span></div>
            <div class="w-[138px] h-[22px] border border-[#adadad] bg-[#dfdfe2] flex items-center justify-between pl-[3px] pr-[3px]"><span data-w="74">Entire structure</span><svg class="w-[11px] h-[11px]"><use href="#car" width="11" height="11"/></svg></div>
            <div class="w-[22px] h-[22px] ml-[2px] border border-[#adadad] bg-[#dfdfe2] flex items-center justify-center"><svg width="14" height="14" viewBox="0 0 14 14"><path d="M12 9a5.500 5.500 0 1 1-1-6M12 1v4H8" fill="none" stroke="#555" stroke-width="1.200"/></svg></div>
            <div class="w-[22px] h-[22px] ml-[10px] border border-[#adadad] bg-[#dfdfe2] flex items-center justify-center"><svg width="12" height="12" viewBox="0 0 12 12"><path d="M1 1l10 10M11 1L1 11" stroke="#2a3a50" stroke-width="2.400"/></svg></div>
            <div class="w-[58px] h-[23px] ml-[4px] border border-[#adadad] bg-[#dfdfe2] flex items-center justify-center">New</div>
            <div class="w-[23px] h-[23px] ml-[8px] bg-[#c9c9c9] flex items-center justify-center"><svg width="16" height="18" viewBox="0 0 16 18"><path d="M2 1h6v7H2zM8 9h6v8H8zM9 3h5v4M2 11v4h5M3 4h4M9 12h4" fill="none" stroke="#777" stroke-width="1.500"/></svg></div></div>
        </fieldset>
        <div class="ml-[9px] mt-[6px] flex items-end"><div class="w-[69px] h-[21px] border border-b-0 border-[#ccd3da] bg-[#f7f7f8] flex items-center pl-[7px]"><span data-w="53">Add Nodes</span></div><div class="w-[75px] h-[17px] border border-l-0 border-b-0 border-[#ccd3da] flex items-center pl-[5px]"><span data-w="63">Delete Nodes</span></div><div class="w-[54px] h-[17px] border border-l-0 border-b-0 border-[#ccd3da] flex items-center pl-[5px]"><span data-w="45">Duplicate</span></div></div>
        <div class="ml-[9px] w-[346px] h-[286px] border border-[#ccd3da] bg-[#f5f5f6]">
          <fieldset class="ml-[13px] mt-[19px] w-[320px] h-[122px] border border-[#ccd3da]">
            <legend class="ml-[8px] text-[#00008b]"><span data-w="134">Add nodes to current frame</span></legend>
            <div class="flex items-center mt-[15px] pl-[24px] h-[21px]"><div class="w-[88px] text-[#00008b]"><span data-w="65">Select nodes.</span></div><div class="w-[129px]"><span data-w="117">No. of Nodes Selected =</span></div><div class="w-[63px] h-[21px] bg-[#fafafa]"></div></div>
            <div class="pl-[20px] mt-[13px] *:h-[14px]"><div><span data-w="276">Any elements that have all of their nodes in the frame are</span></div><div><span data-w="271">also a part of the frame, including any elements that may</span></div><div><span data-w="70">be added later.</span></div></div>
          </fieldset>
          <div class="mt-[16px] pl-[45px] text-[#00008b]"><span data-w="253">Press OK to add the selected nodes, Cancel to clear.</span></div>
          <div class="flex mt-[16px] pl-[97px] gap-[12px]"><div class="w-[64px] h-[20px] border border-[#adadad] bg-[#dfdfe2] flex items-center justify-center">OK</div><div class="w-[64px] h-[20px] border border-[#adadad] bg-[#dfdfe2] flex items-center justify-center">Cancel</div></div>
        </div>
        <div class="ml-[11px] mt-[7px] *:h-[14.300px]"><div><span data-w="23">HINT:</span></div><div class="pl-[10px]"><span data-w="293">For a 2D frame (e.g., a plane frame, a simple wall, or a floor),</span></div><div class="pl-[10px]"><span data-w="324">change the view direction to view the frame in edge view, then use</span></div><div class="pl-[10px]"><span data-w="164">a "box" select to select the nodes.</span></div><div class="pl-[10px] mt-[12px]"><span data-w="315">For a frame that is 3D, it is usually easiest to view the structure in</span></div><div class="pl-[10px]"><span data-w="198">plan, then use one or more "box" selects.</span></div></div>
      </div>
    </div>
    <!-- View controls -->
    <div class="w-[386px] h-[262px] bg-[#f0f0f0] pt-[8px] pl-[6px] font-['Liberation_Sans',sans-serif] text-[12px] text-[#111]">
     <div class="w-[368px] h-[254px] border border-b-0 border-[#ccd3da] pl-[13px]">
       <fieldset class="w-[340px] h-[62px] border border-[#ccd3da] mt-[2px]"><legend class="ml-[8px] text-[#00008b]"><span data-w="246">Distance to View Point (multiple of Max. Dimension)</span></legend>
         <div class="flex items-center h-[22px] mt-[2px] pl-[15px]" id="radios"></div>
         <div class="flex items-center h-[21px] pl-[15px]"><div class="w-[13px] h-[13px] rounded-full border border-[#333] bg-[#fafafa]"></div><div class="w-[129px] pl-[6px]"><span data-w="73">Aperture Angle</span></div><div class="w-[165px] h-[20px] border border-[#7a7a7a] bg-[#fafafa] flex items-center pl-[5px] pb-[2px]"><span data-w="33">9.5605</span></div></div>
       </fieldset>
       <fieldset class="w-[340px] h-[115px] border border-[#ccd3da] mt-[5px]"><legend class="ml-[8px] text-[#00008b]"><span data-w="81">Set View Angles</span></legend>
         <div class="flex"><div class="w-[102px] pt-[3px]"><svg id="dial" class="ml-[8px]" width="76" height="76" viewBox="-38 -38 76 76"></svg><div class="flex items-start pl-[8px] -mt-[1px]"><div class="w-[37px] pt-[6px]"><span data-w="25">View</span></div><svg width="12" height="16" viewBox="0 0 12 16"><path d="M6 0l6 6H8v10H4V6H0z"/></svg></div></div>
          <div class="w-[94px]"><svg id="half" class="ml-[10px] mt-[4px]" width="60" height="34" viewBox="-30 -30 60 34"></svg><div class="mt-[20px] *:h-[14px]"><div><span data-w="83">Click in figures or</span></div><div><span data-w="93">enter angles on the</span></div></div></div>
          <div class="w-[32px] pt-[14px]"><span data-w="25">View</span><svg class="mt-[4px] -ml-[1px]" width="19" height="10" viewBox="0 0 19 10"><path d="M0 5l6-5v3h13v4H6v3z"/></svg></div>
          <div class="pt-[17px]"><div class="flex items-center h-[21px] w-[101px] justify-between"><span class="ml-[5px]" data-w="37">V angle</span><div class="spin w-[50px] h-[21px] border border-[#999] bg-[#fafafa] flex items-center justify-between pl-[2px]"><span data-w="12">60</span></div></div><div class="flex items-center h-[21px] w-[101px] mt-[7px] justify-between"><span data-w="42">H1 angle</span><div class="spin w-[50px] h-[21px] border border-[#999] bg-[#fafafa] flex items-center justify-between pl-[2px]"><span data-w="12">30</span></div></div></div>
         </div>
       </fieldset>
       <fieldset class="w-[339px] h-[40px] border border-[#ccd3da] mt-[6px]"><legend class="ml-[8px] text-[#00008b]"><span data-w="79">Standard Views</span></legend>
         <div class="flex pl-[13px] mt-[1px] *:w-[64px] *:h-[18px] *:border *:border-[#adadad] *:bg-[#dfdfe2] *:text-center *:pt-[3px]"><div>Basic</div><div class="ml-[19px]">Plan</div><div class="ml-[20px]">H1</div><div class="ml-[18px]">H2</div></div>
       </fieldset>
     </div>
    </div>
   </div>
   <div class="w-[13px]"></div>
   <div class="flex-1 bg-[#f9f9f9] border-l border-t border-[#556] pl-[429px] pt-[4px]"><svg id="tower" width="620" height="870" viewBox="0 0 1568 1516" preserveAspectRatio="none"></svg></div>
  </div>
  <div class="h-[18px] bg-[#cccccc] border-b border-white flex"><div class="w-[15px] h-full bg-[#f0f0f0] flex items-center justify-center"><svg width="7" height="9" viewBox="0 0 7 9"><path d="M6 1L2 4.500 6 8" fill="none" stroke="#333" stroke-width="1.800"/></svg></div></div>
 </section>
 <footer class="h-[41px] flex bg-gradient-to-r from-[#243743] from-40% to-[#1a2842] text-white pl-px overflow-hidden">
   <div class="tb flex h-[41px] w-[1672px] shrink-0"></div>
   <div class="w-[119px] flex items-center gap-[8px] shrink-0">
     <svg width="12" height="8" viewBox="0 0 12 8"><path d="M1 7l5-5 5 5" fill="none" stroke="#fff" stroke-width="1.300"/></svg>
     <svg width="16" height="18" viewBox="0 0 16 18"><path d="M4 5h7v8H4zM11 8l3-2v6l-3-2M4 2q4-2 7 0M4 16q4 2 7 0" fill="none" stroke="#fff" stroke-width="1.300"/></svg>
     <svg width="16" height="15" viewBox="0 0 16 15"><path d="M5 2h10v8H5zM10 10v4M7 14h6M1 1h3v4H1zM2.500 5v6" fill="none" stroke="#fff" stroke-width="1.200"/></svg>
     <svg width="16" height="14" viewBox="0 0 16 14"><path d="M1 5h3l4-4v12L4 9H1zM10 4q2 3 0 6M12 2q4 5 0 10" fill="none" stroke="#fff"/></svg>
     <svg width="15" height="15" viewBox="0 0 15 15"><circle cx="7.500" cy="7.500" r="7" fill="#8b90a0"/><path d="M4.500 4.500l6 6M10.500 4.500l-6 6" stroke="#fff" stroke-width="1.400"/></svg>
   </div>
   <div class="w-[66px] shrink-0 pt-[3px] text-[12px] flex flex-col items-center gap-[5px]"><span class="h-[14px]" data-w="51">오후 7:07</span><span data-w="65">2023-07-11</span></div>
 </footer>
</div>

<script>
const $ = s => document.querySelector(s);
/* ---- spreadsheet ---- */
const W = [165,165,165,165,165,165,165.3,72,72,72,72,72,72,72,72,72,55];
$('#cols').innerHTML = '<div class="w-[32.500px] shrink-0 border-r border-[#bbb] flex items-end justify-end p-[3px]"><svg width="12" height="12" viewBox="0 0 12 12"><path d="M12 0v12H0z" fill="#b4b4b4"/></svg></div>' +
  W.map((w,i)=>`<div class="shrink-0 border-r border-[#c0c0c4] flex items-center justify-center" style="width:${w}px">${'ABCDEFGHIJKLMNOPQ'[i]}</div>`).join('');
const A = ['LB1_1','LB1_2','LB1A_1','LB1A_2','LB1A_3','LB1A_4','LB2_1','LB2_2','LB2_3','LB3_1','LB3_2','LB3_3'];
for (let i=1;i<=15;i++) A.push(`PB1-${i}_1`);
A.push('PB2-1_1');
const B = ['C2-1_1','C2-2_1','C2-2_2','C3_1'];
const cell = (w,t,c) => `<div class="shrink-0 border-r border-b flex items-center overflow-hidden ${c}" style="width:${w}px">${t}</div>`;
let html = '';
for (let r=1;r<=32;r++) {
  let h = `<div class="w-[32.500px] shrink-0 border-r border-b border-[#b4b4b4] flex items-center justify-center text-[13px] text-[#333]">${r}</div>`;
  const cy = 'bg-[#ccffff] border-[#cfc8b8] justify-center font-bold', ln = r===4 ? ' border-b-2 border-b-black' : '';
  if (r===1) h += cell(1155.3,'<span class="whitespace-pre" data-w="165">TABLE: Input _ Naming</span>','bg-[#33cccc] border-[#cfc8b8] font-bold pl-[4px]');
  else if (r===2) h += cell(495,'<span data-w="51">Frames</span>',cy)+cell(165,'<span data-w="81">Constraints</span>',cy)+cell(330,'<span data-w="58">Sections</span>',cy)+cell(165.3,'<span data-w="37">Drifts</span>',cy);
  else if (r<=4) h += (r===3?[['Beam',40],['Column',55],['Wall',31],0,['Wall',31],['Shear',40],0]:[0,0,0,0,0,0,0]).map((t,i)=>cell(W[i],t?`<span data-w="${t[1]}">${t[0]}</span>`:'',cy+ln)).join('');
  else {
    const n=r-5, f = n<2?['B2','B1'][n]:(n-1)+'F';
    const v=[A[n],B[n]||'',`W${n<20?n+1:n+81}_1`, ['B2-2','B1-1','B1-2','1F-1','1F-2'][n]||(n-3)+'F', 'W1_1_'+f, n?f+'_Shear':'Base', (33-n)+'F_2_X'];
    h += v.map((t,i)=>cell(W[i],t,'bg-[#ffff99] border-b-[#d6c6c6] border-r-[#d2d2b0] pl-[2px] tracking-[-0.7px]')).join('');
  }
  for (let i=7;i<17;i++) h += cell(W[i],'','bg-[#f9f9f9] border-[#d0d4dc]'+ln);
  html += `<div class="flex h-[22px]">${h}</div>`;
}
$('#rows').innerHTML = html;
const g='bg-[#7f7f7f] text-white', y='bg-[#ffff00] text-[#111]', b='bg-[#0070c0] text-white';
$('#sheets').innerHTML = [['ETC',102,144,g],['Materials',149,226,g],['Nodes',231,289,g],['Elements',294,369,g],['Nodal Loads',373.5,471.5,g],['Story Mass',476,564,g],['Story Data',568,654.5,g],['Naming',658,727.5,y],['Prop_S.Wall',732,824,y],['Prop_C.Beam',828.5,928,y],['Prop_G.Beam',932.5,1033,y],['Prop_E.Beam',1037,1137,y],['Prop_G.Column',1141,1255.5,y],['Prop_E.Column',1259.5,1372.5,y],['Input_Naming',1374.5,1486.5,'n'],['Input_S.Wall',1489,1585,b],['Input_C.Beam',1590.5,1693,b],['Inp',1698,1726,b]].map((t,i,a)=>{
  const w=t[2]-t[1], gap=i<a.length-1?a[i+1][1]-t[2]:0, s=`<span data-w="${i===17?17:w-(i?24:20)}">${t[0]}</span>`;
  return t[3]==='n' ? `<div class="shrink-0 h-[25px] flex items-center justify-center text-[#217346] bg-gradient-to-b from-white to-[#b4d4ee] border-b-[3px] border-[#217346]" style="width:${w}px;margin-right:${gap}px">${s}</div>`
  : `<div class="shrink-0 h-[22px] mt-[2px] flex items-center outline outline-1 outline-white/70 ${i===17?'justify-end':'justify-center'} ${t[3]}" style="width:${w}px;margin-right:${gap}px">${s}</div>`;}).join('');

/* ---- taskbar ---- */
const chrome='<circle cx="12" cy="12" r="11.500" fill="#e33b2e"/><path d="M2 6a11.500 11.500 0 0 0 9 17.400L16 14 8 13z" fill="#2f9e48"/><path d="M22.500 8a11.500 11.500 0 0 1-11 15.500L16.500 14 15 8z" fill="#fbc617"/><circle cx="12" cy="12" r="5.300" fill="#fff"/><circle cx="12" cy="12" r="4.200" fill="#3b7de8"/>';
const ks='<rect x="1" width="22" height="24" rx="5" fill="#f6f6f6"/><path d="M4 3h12v9H4zM5 20V3M14 3L6 12l8 9M6 7h8" fill="none" stroke="#a02028" stroke-width="1.500"/><text x="13" y="20" font-size="12" font-weight="bold" fill="#333">S</text>';
const office=(c,d,l)=>`<path d="M7 1h16v22H7z" fill="${c}"/><path d="M7 12h16v11H7z" fill="${d}"/><path d="M1 6h12v12H1z" fill="${d}" stroke="${c}" stroke-width=".5"/><text x="7" y="16" text-anchor="middle" font-size="11" font-weight="bold" fill="#fff">${l}</text>`;
const ic=[
 '<path d="M1 2h9l2 3h11v17H1z" fill="#f0a91e"/><path d="M2 7h21v15H2z" fill="#fbd668"/><path d="M6 23v-9h12v9h-4v-4h-4v4z" fill="#3d96dc"/>',
 chrome,
 '<ellipse cx="12" cy="8" rx="10" ry="7.500" fill="#eee" stroke="#c23b3b" stroke-width="1.500" transform="rotate(-25 12 8)"/><path d="M8 6l10 12M16 6l-5 12" stroke="#999" stroke-width="1.600"/><circle cx="12" cy="19" r="3" fill="none" stroke="#2b7dc8" stroke-width="2"/><circle cx="20" cy="17" r="3" fill="none" stroke="#2b7dc8" stroke-width="2"/>',
 office('#2b7cd3','#185abd','W'),
 '<path d="M17 0l6 3v18l-6 3L6 13l-3 3-2-1 3-3-3-3 2-1 3 3zM17 7l-6 5 6 5z" fill="#2a9be8" fill-rule="evenodd"/>',
 ks,
 '<path d="M1 2h15l3 3v18H1z" fill="#b51f2b"/><text x="9" y="17" text-anchor="middle" font-size="15" font-weight="bold" fill="#fff">G</text><rect x="15" y="5" width="8" height="5" fill="#e0a020"/><rect x="16" y="11" width="7" height="6" fill="#3a8a3a"/><rect x="14" y="16" width="8" height="5" fill="#3355bb"/>',
 '<path d="M3 1l16 1 1 13H5z" fill="#2346c8" stroke="#ccd" stroke-width="1.500"/><path d="M2 20l12-4 3 5-9 2z" fill="#ddd"/><circle cx="18" cy="18" r="5" fill="#dfe6df"/><path d="M15 16l3 2-3 2M21 16l-3 2 3 2" stroke="#2a8a2a" fill="none" stroke-width="1.300"/>',
 '<path d="M1 1h22v13l-9 9H1z" fill="#fde100"/><path d="M12 12h11v4l-6 7h-5z" fill="#4b4632"/><path d="M14 23v-9h9z" fill="#e2b200"/>',
 '<rect width="24" height="24" rx="4" fill="#f8f8f8"/><circle cx="15" cy="9" r="6.500" fill="#f07c34"/><path d="M11.500 9h7" stroke="#fff" stroke-width="1.600" stroke-dasharray="1.600 1"/><text x="2" y="20" font-size="16" fill="#2b86d0">h</text>',
 chrome+'<circle cx="18" cy="18" r="6" fill="#8a6332"/><path d="M15 15q3 2 5 0M15 19q4 3 6-1" stroke="#3b2a14" fill="none"/>',
 ks,
 '<circle cx="13" cy="12" r="11" fill="#e05b37"/><path d="M13 1a11 11 0 0 1 11 11H13z" fill="#f59478"/><path d="M1 6h12v12H1z" fill="#c43e1c"/><text x="7" y="16" text-anchor="middle" font-size="11" font-weight="bold" fill="#fff">P</text>',
 office('#21a366','#107c41','X'),
 '<circle cx="12" cy="12" r="11" fill="#e8e8e8" stroke="#333" stroke-width="1.500"/><path d="M4 8h13v6H4z" fill="#222"/><path d="M14 12h6v3l-2 5h-3z" fill="#111"/><path d="M6 10h9M6 12h7" stroke="#ccc" stroke-dasharray="1 1"/>',
 '<path d="M1 4h22v17H1z" fill="#222" stroke="#999" stroke-width="1.800"/><path d="M4 9h10M4 12h7M12 16h8" stroke="#777" stroke-dasharray="3 1"/>',
 '<path d="M4 4h17v16l-3 1H3V6z" fill="#21b045"/><text x="12" y="17" text-anchor="middle" font-size="13" font-weight="bold" fill="#fff">D</text>',
 '<circle cx="12" cy="12" r="10.500" fill="#f6386a"/><path d="M6 8h3l1-2h4l1 2h3v9H6z" fill="#fff"/><circle cx="12" cy="12.500" r="3" fill="#f6386a"/><circle cx="12" cy="12.500" r="1.300" fill="#fff"/>',
 '<circle cx="12" cy="12" r="12" fill="#0a78d6"/><path d="M12 9v10l2-2 2 4 1-1-1-3h3z" fill="#fff"/><circle cx="11" cy="8" r="3" fill="none" stroke="#fff"/><path d="M8 12a5.500 5.500 0 1 1 7-1" fill="none" stroke="#fff"/>'];
const noLine=[1,3,5];
const tb = '<div class="w-[46px] shrink-0 flex items-center justify-center"><svg width="16" height="16" viewBox="0 0 16 16"><path d="M0 2.300l6.500-1v6.200H0zM7.500 1.200L16 0v7.500H7.500zM0 8.500h6.500v6.200l-6.500-1zM7.500 8.500H16V16l-8.500-1.200z" fill="#fff"/></svg></div><div class="w-[50px] shrink-0 flex items-center justify-center"><svg width="17" height="16" viewBox="0 0 17 16"><path d="M1 4h10v8H1zM1 0v2h10V0M1 16v-2h10v2M15 0v4M15 12v4M13.500 6h3v3h-3z" fill="none" stroke="#fff" stroke-width="1.300"/></svg></div>' +
 ic.map((s,i)=>`<div class="w-[49.050px] shrink-0 flex flex-col items-center pt-[8px] ${i===14?'bg-[#52616b]':''}"><svg width="24" height="24" viewBox="0 0 24 24">${s}</svg>${noLine.includes(i)?'':'<div class="mt-auto h-[3px] w-[40px] bg-[#76b9ed]"></div>'}</div>`).join('');
document.querySelectorAll('.tb').forEach(e=>e.innerHTML=tb);

/* ---- Perform3D toolbar ---- */
const D='stroke="#3d4d60" fill="none" stroke-width="1.500"';
const grid='M2 4v17h18M2 9h9M2 13h18M2 17h18M7 4v17M12 9v12M17 13v8';
const tl=[[1944,`<path d="M3 2h11l5 5v15H3z" fill="#dce4ee" stroke="#3d4d60" stroke-width="1.500"/><path d="M14 2v5h5" ${D}/>`],[1976,'<path d="M2 5l7-4 13 10-8 12L2 14z" fill="#3d5068"/><path d="M2 14l12 9 1-3L4 11z" fill="#e6ecf2"/>'],
[2004,0],[2032,'<path d="M1 1h20l2 2v20H1z" fill="#3d4d60"/><path d="M5 2h13v8H5zM6 14h12v9H6z" fill="#dfe6ee"/><path d="M13 3h3v5h-3z" fill="#3d4d60"/>'],[2064,'<path d="M1 1h20l2 2v20H1z" fill="#3d4d60"/><path d="M5 2h13v8H5zM6 14h12v9H6z" fill="#dfe6ee"/><path d="M5 21L20 4" stroke="#111" stroke-width="3"/>'],[2096,'<path d="M4 4l17 17M21 2L4 21" stroke="#26303c" stroke-width="3.500"/>'],[2130,`<path d="M1 1h22v22H1zM1 9h22M1 13h22M1 18h22M7 5v18M13 5v18M18 5v18" ${D}/><path d="M1 1h22v4H1z" fill="#3d4d60"/>`],
[2160,0],[2187,'<path d="M18 5a9 9 0 1 0 0 14" stroke="#4a5868" fill="none" stroke-width="4"/><path d="M12 9h6V5l6 7-6 7v-4h-6z" fill="#7b8794"/>'],[2216,0],
[2244,`<path d="M2 8v15h20V8M2 13h20M2 18h20M8 8v15M15 8v15M3 4h20M12 4l4-3 4 3" ${D}/><circle cx="15" cy="10" r="3.500" fill="#e02020"/>`,1],[2276,`<path d="${grid}" ${D}/><path d="M14 1l7 6-7 6z" fill="#222"/>`],[2304,0],
[2332,`<path d="${grid}" ${D}/><path d="M17 1l5 6-5 6-5-6z" ${D}/>`],[2364,`<path d="M1 1h22v22H1z" ${D} stroke-dasharray="5 3"/><circle cx="7" cy="7" r="3" fill="#3d4d60"/><circle cx="16" cy="16" r="3.500" fill="#3d4d60"/>`],[2395,`<path d="M3 2v20h20M3 22L9 6q3-2 6 0l5 8" ${D}/>`],[2428,`<path d="M4 22V3h16v19" fill="none" stroke="#3d4d60" stroke-width="3"/><path d="M1 1h5v4H1zM18 1h5v4h-5zM2 20h4v3H2zM18 20h4v3h-4z" fill="#f5f5f6" stroke="#333"/>`],[2460,`<path d="M4 22v-7L14 2v7zM9 22v-6L21 3v7zM4 22l5-5" ${D}/>`,1],[2492,`<path d="M1 3h22M4 3v6M12 3v6M20 3v6M2 9h20M3 14v7h18v-7" ${D}/><path d="M6 17h12" stroke="#333" stroke-width="2.500" stroke-dasharray="2"/>`],[2524,`<path d="M4 1h12v16H4zM7 5h7M7 9h7M12 15l8-2 2 6-8 4z" ${D}/><path d="M2 3l7 7M16 12l4 4" stroke="#333" stroke-width="2.500"/>`],[2556,`<path d="M2 3h14M5 0l6 6M11 0L5 6M5 8v13M10 8v13M18 21h6M21 17v6" ${D}/><text x="13" y="16" font-size="14" fill="#3d4d60">δ</text>`],[2588,`<path d="M3 1h18v8H3zM3 17h18v6H3zM3 5h18" fill="#c4ced8" stroke="#3d4d60"/><path d="M1 13h22" stroke="#e02020" stroke-width="2"/>`],[2620,'<path d="M1 11h6v11H1z" fill="#3d4d60"/><path d="M8 11l5-10q4 0 2 8h7q2 2 0 5l-2 9H8z" fill="#8296ad" stroke="#3d4d60"/>'],[2652,`<path d="M2 2h20v20H2zM5 20L20 4" ${D}/>`],[2671,0],
[2691,`<path d="M6 22L20 7" ${D}/><circle cx="4" cy="4" r="2.500" fill="#333"/><circle cx="21" cy="19" r="3" fill="#3d4d60"/><path d="M8 5h6" stroke="#333" stroke-width="2" stroke-dasharray="2"/>`],[2721,'<path d="M6 4q9 8 4 13-9 4-9-3z" fill="#26303c"/><circle cx="7" cy="3" r="2.500" fill="#d02020"/><path d="M10 23L22 8" stroke="#333" stroke-width="1.500"/><circle cx="21" cy="20" r="2.500" fill="#d02020"/>'],[2754,'<circle cx="11" cy="10" r="8" fill="#eef" stroke="#26303c" stroke-width="2.500"/><path d="M7 7h8v7H7z" fill="#3d4d60"/><path d="M16 16l6 6" stroke="#26303c" stroke-width="4"/>'],[2786,'<circle cx="11" cy="10" r="8" fill="#c4c4c4" stroke="#999" stroke-width="2.500"/><circle cx="11" cy="10" r="3" fill="#999"/><path d="M16 16l6 6" stroke="#999" stroke-width="4"/>'],[2818,`<path d="M8 14l3 2V7h3v7l6 1v4l-3 4h-5zM2 12q0-8 8-9h6M13 0l4 3-4 3" ${D}/>`],[2850,'<path d="M5 9V1h13v8M1 10h22v10H1zM5 15h14v8H5z" fill="#d0d0d0" stroke="#aaa" stroke-width="1.500"/>']];
let px=1928, th='';
tl.forEach(t=>{ const w=t[1]?32:2, m=t[0]-w/2-px; px=t[0]+w/2;
 th += t[1] ? `<div class="shrink-0 w-[32px] h-[32px] flex items-center justify-center ${t[2]?'border border-[#0078d7]':''}" style="margin-left:${m}px"><svg width="24" height="22" viewBox="0 0 24 24" preserveAspectRatio="none">${t[1]}</svg></div>` : `<div class="shrink-0 w-[2px] flex justify-center" style="margin-left:${m}px"><i class="w-px h-[22px] bg-[#c4c4c4]"></i></div>`;});
$('#tools').innerHTML=th;

/* ---- view controls ---- */
$('#radios').innerHTML=[['1',46],['2',47],['3',49,1],['5',41],['Infinity',69]].map(r=>`<div class="flex items-center shrink-0 gap-[6px]" style="width:${r[1]-(r[0]==='Infinity'?6:0)}px"><div class="w-[13px] h-[13px] shrink-0 rounded-full border border-[#333] bg-[#fafafa] flex items-center justify-center">${r[2]?'<div class="w-[7px] h-[7px] rounded-full bg-[#222]"></div>':''}</div><span ${r[0]==='Infinity'?'data-w="31"':''}>${r[0]}</span></div>`).join('')+'<div class="w-[56px] h-[20px] border border-[#7a7a7a] bg-[#fafafa] flex items-center pl-[3px]">3</div>';
let dots='';
for(let i=0;i<24;i++){const a=i*Math.PI/12;dots+=`<rect x="${33*Math.cos(a)-1}" y="${33*Math.sin(a)-1}" width="2.200" height="2.200"/>`;}
$('#dial').innerHTML=dots+'<path d="M0 0l-3-3M0 0l5-2M-18-28l5 5M24-12l6-3" stroke="#000"/><circle r="1.800"/><text x="-16" y="-10" font-size="12">H2</text><text x="8" y="-4" font-size="12">H1</text>';
dots='';
for(let i=0;i<=12;i++){const a=Math.PI+i*Math.PI/12;dots+=`<rect x="${27*Math.cos(a)-1}" y="${27*Math.sin(a)-1}" width="2.200" height="2.200"/>`;}
$('#half').innerHTML=dots+'<path d="M0 0l4-5M10-16l5-7" stroke="#000"/><circle r="1.500"/><text x="3" y="-6" font-size="12">V</text>';
document.querySelectorAll('.spin').forEach(e=>e.insertAdjacentHTML('beforeend','<svg width="15" height="19" viewBox="0 0 15 19"><path d="M.5.500h13v8H.5zM.5 10h13v8H.5z" fill="#eee" stroke="#999"/><path d="M4 6h7L7.500 3zM4 13h7l-3.500 3z"/></svg>'));

/* ---- structure model ---- */
let seed=7; const rnd=()=>(seed=(seed*16807)%2147483647)/2147483647;
const K='#2d2d2d', out=[];
const node=(x,y,w=12,h=9)=>out.push(`<rect x="${(x-w/2).toFixed(1)}" y="${(y-h/2).toFixed(1)}" width="${w}" height="${h}" fill="${K}"/>`);
const poly=(p,f,s)=>out.push(`<polygon points="${p}" fill="${f}" ${s?`stroke="${s}" stroke-width="1.500"`:''}/>`);
const line=(a,b,c,d,w=2)=>out.push(`<path d="M${a.toFixed(1)} ${b.toFixed(1)}L${c.toFixed(1)} ${d.toFixed(1)}" stroke="${K}" stroke-width="${w}"/>`);
const L=(a,b,t)=>a+(b-a)*t;
const lv=[118,156,223,262,295,328,361,393,426,457,490,521,551,582,613,643,673,703,733,762,791,820,848,877,905,933,961,989,1014,1041,1068,1094,1115,1136,1160,1185,1210,1235,1262].map(v=>(v-118)/1144);
function fence(a,b,c,d,n){ // a,b top ends; c,d bottom ends
  poly([a,b,d,c].join(' '),'#dedede',K);
  for(const t of [.3,.34,.6,.64,.9]) line(L(a[0],c[0],t),L(a[1],c[1],t),L(b[0],d[0],t),L(b[1],d[1],t),1.5);
  for(let i=0;i<=n;i++){const u=i/n,x0=L(a[0],b[0],u),y0=L(a[1],b[1],u),x1=L(c[0],d[0],u),y1=L(c[1],d[1],u);
    out.push(`<path d="M${x0} ${y0}L${x1} ${y1}" stroke="#f9f9f9" stroke-width="9"/>`);line(x0-4,y0,x1-4,y1,2);line(x0+4,y0,x1+4,y1,2);
    for(const t of [0,.31,.62,1]) node(L(x0,x1,t),L(y0,y1,t),14,9);}
}
fence([105,1162],[341,1114],[112,1242],[345,1192],3);
fence([1280,1112],[1322,1107],[1275,1190],[1315,1187],1);
fence([1322,1107],[1478,1338],[1315,1187],[1470,1421],7);
function face(tl,tr,bl,br,us,rows,panels,nw=12,nh=8,lw=3){
  panels.forEach(p=>poly([[L(tl[0],tr[0],p[0]),L(tl[1],tr[1],p[0])],[L(tl[0],tr[0],p[1]),L(tl[1],tr[1],p[1])],[L(bl[0],br[0],p[1]),L(bl[1],br[1],p[1])],[L(bl[0],br[0],p[0]),L(bl[1],br[1],p[0])]].join(' '),'#d4d4d2'));
  us.forEach(u=>line(L(tl[0],tr[0],u),L(tl[1],tr[1],u),L(bl[0],br[0],u),L(bl[1],br[1],u),2));
  rows.forEach(t=>{const a=L(tl[0],bl[0],t),b=L(tl[1],bl[1],t),c=L(tr[0],br[0],t),d=L(tr[1],br[1],t);line(a,b,c,d,lw);us.forEach(u=>node(L(a,c,u),L(b,d,u),nw,nh));});
}
const low=lv.slice(27).flatMap((v,i,a)=>i<a.length-1?[(v+a[i+1])/2]:[]);
// recessed core between the towers
face([672,172],[855,165],[715,1338],[855,1328],[0,.12,.22,.3,.42,.52,.58,.68,.82,.97],lv.concat(low),[[.15,.28],[.48,.68],[.82,.97]],13,8,5);
poly('765,215 780,215 783,1330 770,1330',K);
// low wing
const wl=lv.map((v,i)=>i*.0295).filter(v=>v<1);
face([1068,366],[1275,355],[1045,1318],[1222,1296],[0,.08,.18,.26,.36,.44,.53,.62,.7,.8,.88,.94,1],wl.concat([.605,.635,.665,.695,.725,.752,.782,.812,.84,.87,.9,.93,.96,.985]),[[.1,.3],[.36,.47],[.53,.74],[.84,1]],12,9,6);
// wing side
poly('1275,355 1325,405 1262,1362 1222,1296',K);
for(let i=0;i<31;i++){const t=i/31; for(let u=0;u<4;u++){const x=L(L(1275,1325,.12+u*.24),L(1222,1262,.12+u*.24),t),y=L(L(355,405,.12+u*.24),L(1296,1362,.12+u*.24),t)+14;if(rnd()>t*.9)out.push(`<rect x="${x.toFixed(1)}" y="${y.toFixed(1)}" width="${(6-4*t).toFixed(1)}" height="${(14-8*t).toFixed(1)}" fill="#d0d0d0"/>`);} node(L(1325,1262,t),L(405,1362,t));}
// middle-right tower
poly('855,136 968,134 988,155 1000,142 1068,140 1068,260 1058,700 1043,1330 853,1330',K);
for(let x=855;x<1068;x+=17) node(x,137,13,9);
for(const [x,n,w] of [[880,1,6],[893,.4,3],[907,.5,3],[921,.25,3],[932,.6,4],[945,.55,4],[958,.2,3],[986,1,9],[1000,.4,3],[1012,.5,4],[1025,.7,5],[1040,.6,4],[1052,.3,3]])
 for(let y=152;y<1320;y+=(y<300?12:y<1000?15:11)){ if(rnd()<n*(y<320?1.300:.75)) {const xx=x+(x>1000?-(y/1300)*14:0);out.push(`<rect x="${(xx-w/2).toFixed(1)}" y="${y}" width="${w}" height="${y<320?9:7}" fill="${y<320||n>.9?'#d9d9d6':'#8c8c8a'}"/>`);}}
for(let i=0;i<lv.length;i++){node(L(1070,1045,lv[i]),L(150,1325,lv[i]));node(L(857,855,lv[i]),L(138,1330,lv[i]));}
// left tower
poly('265,118 290,98 405,82 515,135 590,128 640,152 665,176 685,212 692,300 714,1410 640,1372 560,1350 468,1385 435,1325 352,1262','#d9d9d9');
poly('300,104 405,84 515,137 590,130 640,154 665,178 685,214 692,300 714,1408 640,1368 520,1340 455,1290 362,1240 325,700 300,330',K);
for(let i=0;i<1300;i++){const t=Math.pow(rnd(),1.4),u=Math.pow(rnd(),1.900),xl=L(292,360,t),xr=L(660,705,t),x=L(xl,xr,u*.98),y=L(110+Math.max(0,(x-405)*.42),1270+(x-350)*.22,t);
 const light=u<.07||t<.05; out.push(`<rect x="${x.toFixed(1)}" y="${y.toFixed(1)}" width="${light?3.5:2.500}" height="${(light?9:6)+rnd()*5|0}" fill="${light?(rnd()<.35?'#bdbdbb':'#7c7c7b'):(u<.3&&rnd()<.3?'#7a7b7a':'#4e4f4e')}"/>`);}
for(let i=0;i<45;i++){const x=440+rnd()*48,y=112+rnd()*150+(x-445)*.4;out.push(`<rect x="${x.toFixed(1)}" y="${y.toFixed(1)}" width="4" height="8" fill="#c4c4c2"/>`);}
lv.forEach((t,i)=>{const a=L(265,350,t),b=L(118,1262,t);node(a,b);line(a,b,a+22,b+16);node(a+24,b+12,10,8);line(a,b,a+40,b-6,2);
  node(L(685,714,t),L(212,1400,t));});
line(268,118,352,1262,2);
for(const [x,y] of [[287,98],[307,95],[327,92],[347,89],[366,86],[386,84],[405,82],[425,92],[440,98],[455,105],[470,110],[485,118],[500,126],[515,136],[535,134],[553,131],[570,129],[590,128],[610,136],[630,147],[640,153],[660,172]]) node(x,y,13,9);
// exposed lower storeys
for(let r=0;r<8;r++) for(let c=0;c<16;c++){const x=355+c*12+r*2,y=1235+r*15+c*9; if(y<1445&&rnd()<.72) node(x,y,12,8);}
for(let c=0;c<16;c++) for(let r=0;r<6;r++){const x=480+c*12,y=1350+r*16; if(rnd()<.6&&y<1445-Math.max(0,x-560)*.25) node(x,y,12,8);}
poly('640,1300 715,1300 713,1410 690,1395 640,1368',K);
for(const [x,e] of [[490,1425],[515,1425],[570,1442],[775,1405],[795,1405],[863,1396],[880,1396],[893,1394],[925,1392],[945,1390],[980,1388],[992,1388],[1035,1385],[1085,1380],[1103,1378],[1115,1376],[1175,1370],[1190,1370],[1200,1368]]) {line(x,1310,x,e,3);for(let y=1320;y<=e;y+=13) node(x,y,13,8);}
line(720,1378,860,1367,3);line(895,1358,1080,1345,3);line(1115,1342,1235,1333,3);
// front fences
fence([105,1162],[468,1475],[112,1242],[468,1560],10);
fence([468,1475],[695,1416],[468,1560],[697,1502],3);
fence([695,1416],[770,1403],[697,1502],[770,1483],1);
fence([770,1403],[1478,1338],[770,1483],[1470,1421],8);
$('#tower').innerHTML=out.join('');

/* set tracking so each label takes its nominal width; repeated once styles and fonts have settled */
function fit(){
  const els=[...document.querySelectorAll('[data-w]')];
  els.forEach(e=>{e.style.display='inline-block';e.style.flexShrink=0;e.style.letterSpacing='0px';});
  const r=document.createRange();
  const ms=els.map(e=>{r.selectNodeContents(e);return r.getBoundingClientRect().width;});
  els.forEach((e,i)=>{e.style.letterSpacing=((+e.dataset.w-ms[i])/e.textContent.length).toFixed(3)+'px';});
}
fit();
addEventListener('load',fit);
document.fonts.ready.then(fit);
new MutationObserver(fit).observe(document.head,{childList:true,subtree:true});
requestAnimationFrame(()=>requestAnimationFrame(fit));
setTimeout(fit,150);
</script>
</body>
</html>
